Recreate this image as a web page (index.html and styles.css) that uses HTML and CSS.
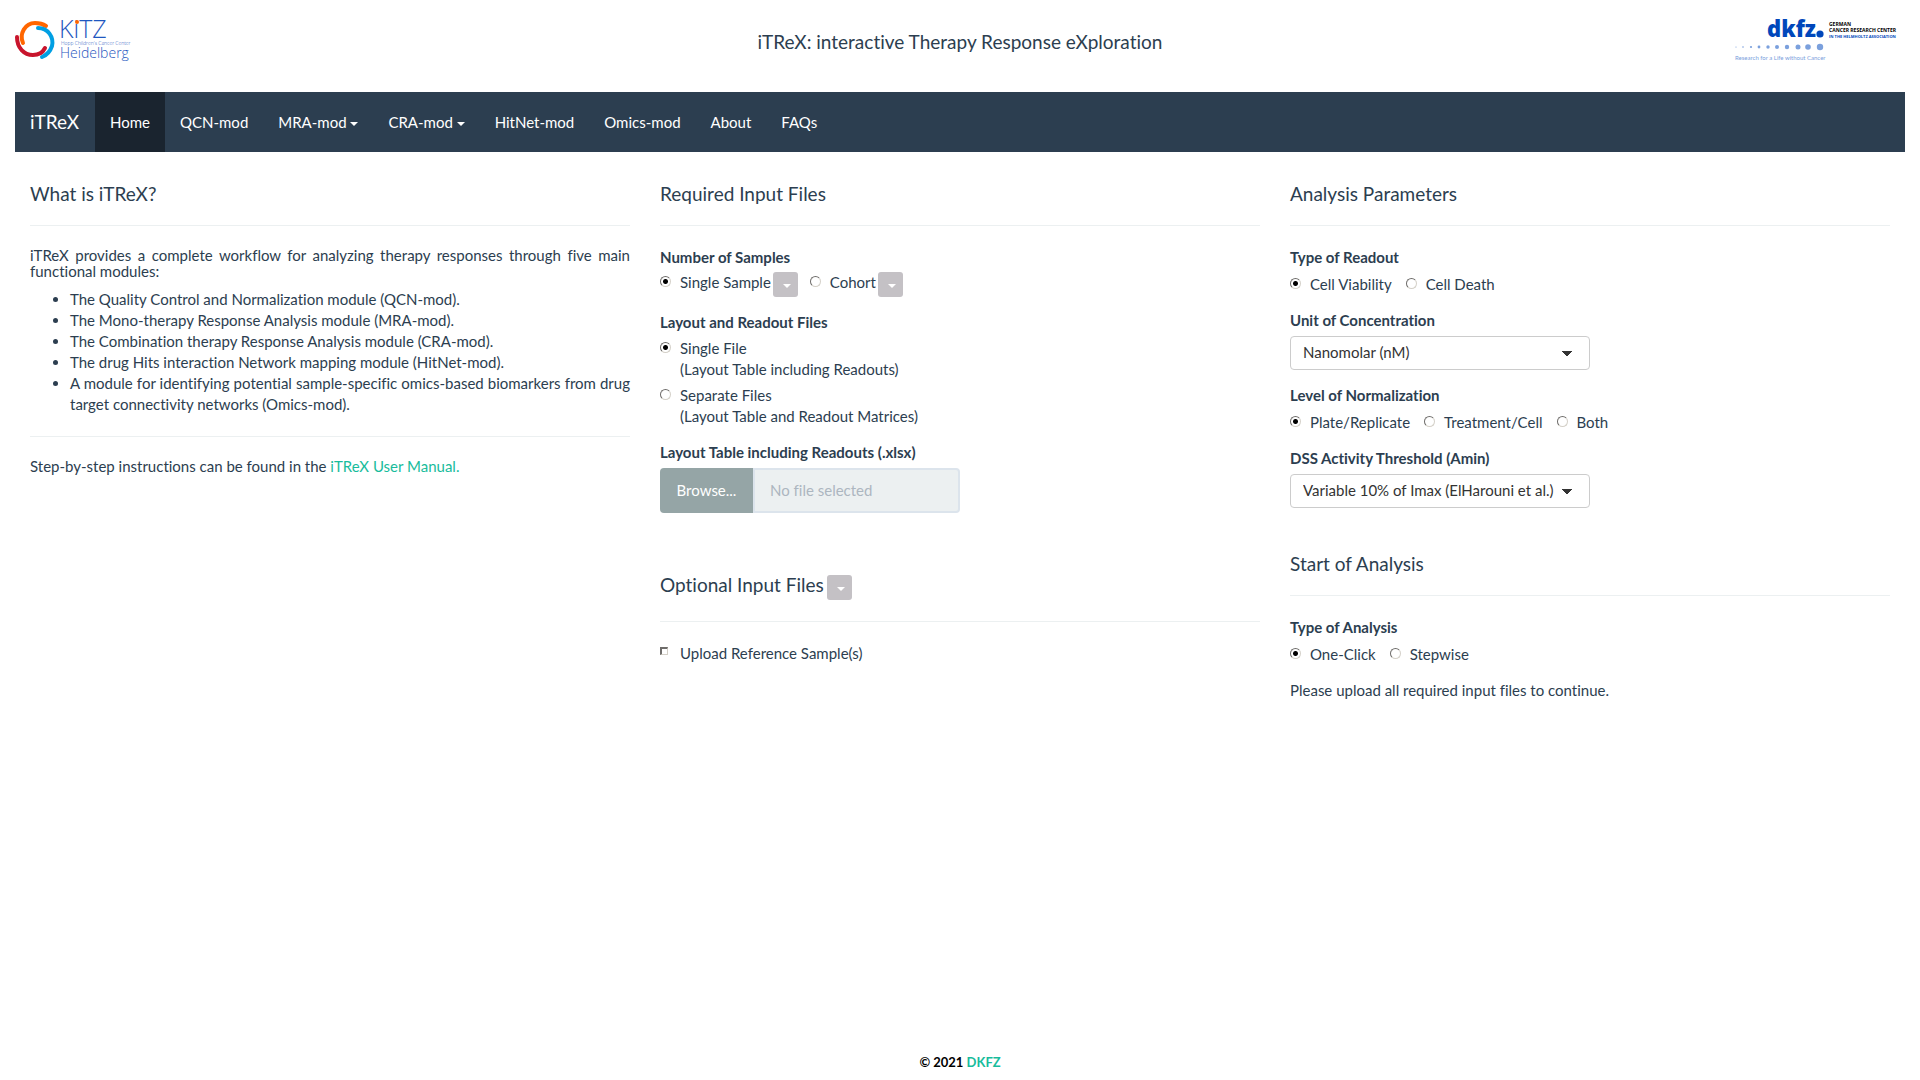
FILE: index.html
```html
<!DOCTYPE html>
<html lang="en">
<head>
<meta charset="utf-8">
<title>iTReX</title>
<link rel="stylesheet" href="styles.css">
</head>
<body>
<header class="banner">
  <svg class="logo" width="116" height="42" viewBox="0 0 116 42" role="img" aria-label="KiTZ Heidelberg">
    <g fill="none" stroke-linecap="round">
      <path stroke="#ff6600" stroke-width="4" d="M8 23C4 14 10 3 20 3C25 3 28 4 31 6"/>
      <path stroke="#009fe3" stroke-width="4" d="M23 8C33 8 39 17 37 26C35 32 32 35 27 37"/>
      <path stroke="#c8142c" stroke-width="4" d="M2 17C2 28 9 35 18 35C24 35 28 32 30 28"/>
    </g>
    <g fill="#1f57c0" font-family="Open Sans, sans-serif" font-weight="300">
      <text x="44" y="18" font-size="25">KiTZ</text>
      <text x="46" y="25" font-size="5">Hopp Children's Cancer Center</text>
      <text x="45" y="38" font-size="14">Heidelberg</text>
    </g>
    <circle cx="62" cy="2" r="2" fill="#ff6600"/>
  </svg>
  <h1 class="title">iTReX: interactive Therapy Response eXploration</h1>
  <svg class="logo" width="170" height="42" viewBox="0 0 170 42" role="img" aria-label="dkfz German Cancer Research Center">
    <g font-family="Open Sans, sans-serif" font-weight="800" fill="#0047bb">
      <text x="32" y="17" font-size="22">dkfz</text>
      <g font-weight="700">
        <text x="94" y="6" font-size="5" fill="#000">GERMAN</text>
        <text x="94" y="12" font-size="5" fill="#000">CANCER RESEARCH CENTER</text>
        <text x="94" y="18" font-size="4">IN THE HELMHOLTZ ASSOCIATION</text>
      </g>
    </g>
    <circle cx="85" cy="14" r="3.6" fill="#0047bb"/>
    <g fill="#7ba0dd">
      <circle cx="1" cy="27" r=".6"/><circle cx="8" cy="27" r=".8"/><circle cx="16" cy="27" r="1.1"/><circle cx="24" cy="27" r="1.4"/><circle cx="33" cy="27" r="1.7"/><circle cx="42" cy="27" r="2"/><circle cx="52" cy="27" r="2.2"/><circle cx="63" cy="27" r="2.5"/><circle cx="73" cy="27" r="2.8"/><circle cx="85" cy="27" r="3.2"/>
      <text x="0" y="40" font-family="Lato, sans-serif" font-size="6">Research for a Life without Cancer</text>
    </g>
  </svg>
</header>

<nav class="navbar">
  <a class="brand" href="#">iTReX</a>
  <a class="active" href="#">Home</a>
  <a href="#">QCN-mod</a>
  <a href="#">MRA-mod <span class="caret"></span></a>
  <a href="#">CRA-mod <span class="caret"></span></a>
  <a href="#">HitNet-mod</a>
  <a href="#">Omics-mod</a>
  <a href="#">About</a>
  <a href="#">FAQs</a>
</nav>

<main class="columns">
  <section class="about">
    <h2>What is iTReX?</h2>
    <hr>
    <p>iTReX provides a complete workflow for analyzing therapy responses through five main functional modules:</p>
    <ul>
      <li>The Quality Control and Normalization module (QCN-mod).</li>
      <li>The Mono-therapy Response Analysis module (MRA-mod).</li>
      <li>The Combination therapy Response Analysis module (CRA-mod).</li>
      <li>The drug Hits interaction Network mapping module (HitNet-mod).</li>
      <li>A module for identifying potential sample-specific omics-based biomarkers from drug target connectivity networks (Omics-mod).</li>
    </ul>
    <hr>
    <p>Step-by-step instructions can be found in the <a href="#">iTReX User Manual.</a></p>
  </section>

  <section>
    <h2>Required Input Files</h2>
    <hr>
    <fieldset>
      <legend>Number of Samples</legend>
      <div class="options with-menus">
        <div class="option"><label><input type="radio" name="samples" checked>Single Sample</label><button class="info" type="button" aria-label="About single sample"><span class="caret"></span></button></div>
        <div class="option"><label><input type="radio" name="samples">Cohort</label><button class="info" type="button" aria-label="About cohort"><span class="caret"></span></button></div>
      </div>
    </fieldset>
    <fieldset>
      <legend>Layout and Readout Files</legend>
      <div class="options stacked">
        <label><input type="radio" name="layout" checked><span>Single File<br>(Layout Table including Readouts)</span></label>
        <label><input type="radio" name="layout"><span>Separate Files<br>(Layout Table and Readout Matrices)</span></label>
      </div>
    </fieldset>
    <div class="field">
      <label class="caption" for="file">Layout Table including Readouts (.xlsx)</label>
      <div class="upload">
        <button type="button">Browse...</button>
        <input id="file" type="text" placeholder="No file selected" readonly>
      </div>
    </div>
    <div class="heading-row">
      <h2>Optional Input Files</h2>
      <button class="info" type="button" aria-label="About optional files"><span class="caret"></span></button>
    </div>
    <hr>
    <label class="check"><input type="checkbox">Upload Reference Sample(s)</label>
  </section>

  <section>
    <h2>Analysis Parameters</h2>
    <hr>
    <fieldset>
      <legend>Type of Readout</legend>
      <div class="options">
        <label><input type="radio" name="readout" checked>Cell Viability</label>
        <label><input type="radio" name="readout">Cell Death</label>
      </div>
    </fieldset>
    <div class="field">
      <label class="caption" for="unit">Unit of Concentration</label>
      <select id="unit"><option>Nanomolar (nM)</option></select>
    </div>
    <fieldset>
      <legend>Level of Normalization</legend>
      <div class="options">
        <label><input type="radio" name="level" checked>Plate/Replicate</label>
        <label><input type="radio" name="level">Treatment/Cell</label>
        <label><input type="radio" name="level">Both</label>
      </div>
    </fieldset>
    <div class="field">
      <label class="caption" for="dss">DSS Activity Threshold (Amin)</label>
      <select id="dss"><option>Variable 10% of Imax (ElHarouni et al.)</option></select>
    </div>
    <h2 class="later">Start of Analysis</h2>
    <hr>
    <fieldset>
      <legend>Type of Analysis</legend>
      <div class="options">
        <label><input type="radio" name="analysis" checked>One-Click</label>
        <label><input type="radio" name="analysis">Stepwise</label>
      </div>
    </fieldset>
    <p>Please upload all required input files to continue.</p>
  </section>
</main>

<footer>© 2021 <a href="#">DKFZ</a></footer>
</body>
</html>
```
FILE: styles.css
```css
* { box-sizing: border-box; }

body {
  display: flex;
  flex-direction: column;
  min-height: 100vh;
  margin: 0;
  padding: 0 15px;
  background: #fff;
  color: #2c3e50;
  font: 15px/21px Lato, sans-serif;
  font-variant-ligatures: no-common-ligatures;
}

a { color: #18bc9c; text-decoration: none; }
h1, h2 { margin: 0; font-size: 19px; line-height: 21px; font-weight: 400; }
p { margin: 0; }
hr { width: 100%; height: 1px; margin: 21px 0; border: 0; background: #ecf0f1; }

.banner {
  display: grid;
  grid-template-columns: 1fr auto 1fr;
  align-items: start;
  height: 92px;
  padding-top: 20px;
}
.banner .title { padding-top: 11px; }
.banner .logo { display: block; overflow: visible; }
.banner .logo:last-child { justify-self: end; }

.navbar { display: flex; height: 60px; background: #2c3e50; }
.navbar a { padding: 20px 15px; color: #fff; }
.navbar .brand { min-width: 80px; padding-top: 19px; font-size: 19px; }
.navbar .active { background: #1a242f; }

.caret {
  display: inline-block;
  vertical-align: middle;
  border-top: 4px solid;
  border-right: 4px solid transparent;
  border-left: 4px solid transparent;
}

.columns {
  display: grid;
  grid-template-columns: repeat(3, 1fr);
  gap: 30px;
  flex: 1;
  padding: 31px 15px 0;
}
.about p { line-height: 16px; text-align: justify; }
.about ul { margin: 10px 0 0; padding-left: 40px; text-align: justify; }

fieldset, .field { margin: 0 0 15px; padding: 0; border: 0; min-width: 0; }
legend, .caption { display: block; padding: 0; font-weight: 700; }

.options { display: flex; gap: 14px; padding-top: 6px; }
.options label, .check { display: flex; gap: 9px; }
.options.with-menus { gap: 12px; padding-top: 4px; }
.option { display: flex; gap: 2px; }
.options.stacked { flex-direction: column; gap: 5px; padding-top: 5px; }

input[type="radio"], input[type="checkbox"] {
  appearance: none;
  flex: none;
  width: 11px;
  height: 11px;
  margin: 4px 0 0;
  border: 1px solid;
  border-color: #6e6c6a #d4d0c8 #d4d0c8 #6e6c6a;
  background: #fff;
}
input[type="radio"] { border-radius: 50%; }
input[type="radio"]:checked { background: radial-gradient(circle, #000 2px, #fff 3px); }
input[type="checkbox"] {
  width: 8px;
  height: 8px;
  margin-right: 3px;
  border-width: 2px 1px 1px 2px;
}

.info {
  width: 25px;
  height: 25px;
  padding: 3px 0 0 3px;
  border: 0;
  border-radius: 3px;
  background: #c4c1c5;
  color: #fff;
  line-height: 20px;
}

.upload { display: flex; width: 300px; height: 45px; margin-top: 5px; }
.upload button {
  width: 93px;
  padding: 0;
  border: 0;
  border-radius: 4px 0 0 4px;
  background: #95a5a6;
  color: #fff;
  font: inherit;
}
.upload input {
  flex: 1;
  min-width: 0;
  padding: 0 15px;
  border: 2px solid #dce4ec;
  border-radius: 0 4px 4px 0;
  background: #ecf0f1;
  font: inherit;
}
.upload input::placeholder { color: #acb6c0; }

.heading-row { display: flex; gap: 3px; height: 25px; margin-top: 62px; }
.heading-row h2 { line-height: 19px; }

select {
  appearance: none;
  display: block;
  width: 300px;
  height: 34px;
  margin-top: 5px;
  padding: 0 12px 2px;
  border: 1px solid #ccc;
  border-radius: 4px;
  background: linear-gradient(to bottom left, #333 50%, transparent 51%) 271px 14px / 5px 5px no-repeat,
    linear-gradient(to bottom right, #333 50%, transparent 51%) 276px 14px / 5px 5px no-repeat, #fff;
  color: #333;
  font: inherit;
}

.later { margin-top: 45px; }

footer { padding-bottom: 7px; color: #000; font-size: 13px; font-weight: 700; text-align: center; }
```
